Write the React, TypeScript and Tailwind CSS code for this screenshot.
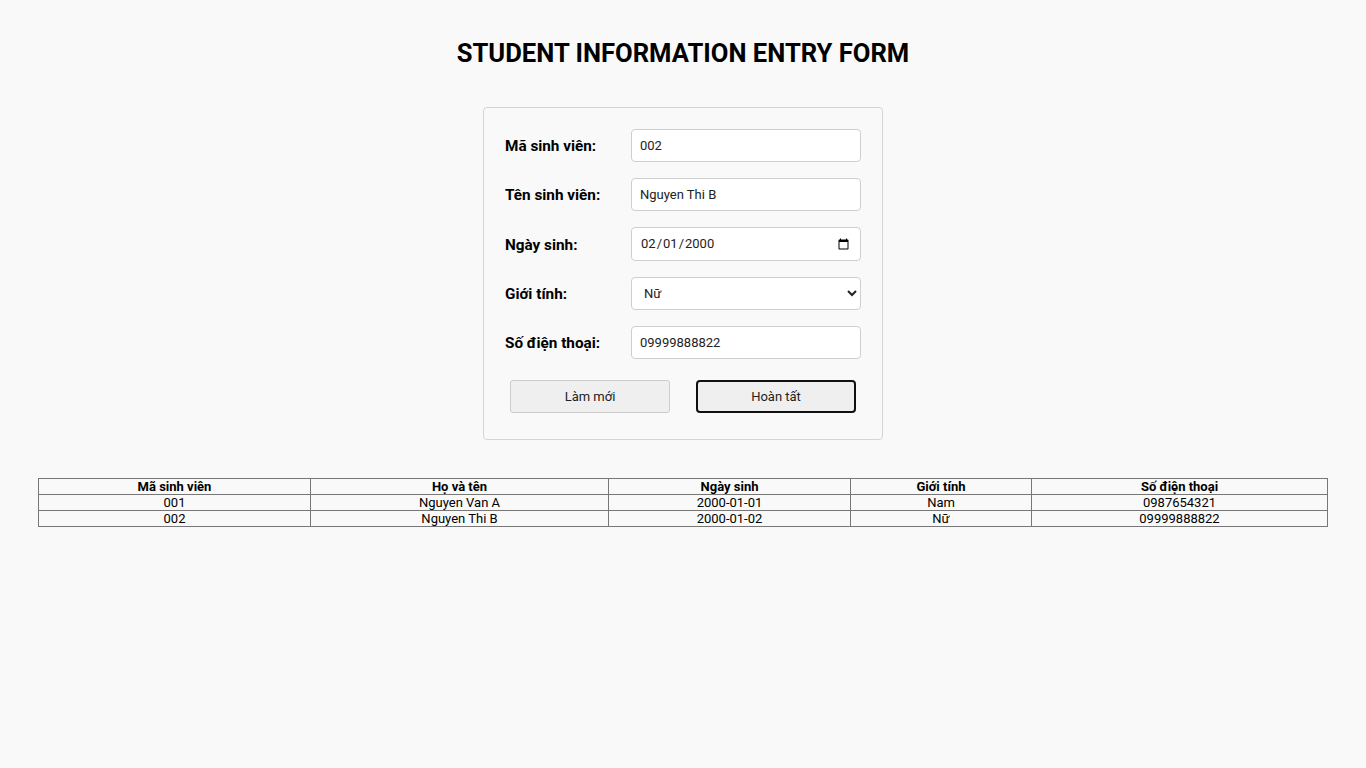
import { useState } from "react"

type Student = { id: string; name: string; dob: string; gender: string; phone: string }

const rows: Student[] = [
    { id: "001", name: "Nguyen Van A", dob: "2000-01-01", gender: "Nam", phone: "0987654321" },
    { id: "002", name: "Nguyen Thi B", dob: "2000-01-02", gender: "Nữ", phone: "09999888822" },
]

const inputCls =
    "w-[230px] h-[33px] rounded-[4px] border border-[#cfcfcf] bg-white px-2 text-[13px] text-[#222] outline-none"
const labelCls = "text-[15.3px] font-bold pt-[2px]"

export default function App() {
    const [id, setId] = useState("002")
    const [name, setName] = useState("Nguyen Thi B")
    const [dob, setDob] = useState("2000-02-01")
    const [gender, setGender] = useState("Nữ")
    const [phone, setPhone] = useState("09999888822")

    return (
        <div className="min-h-screen bg-[#f9f9f9] text-black font-['Roboto',sans-serif] pt-[36px]">
            <h1 className="text-center text-[25.6px] font-bold leading-[34px]">STUDENT INFORMATION ENTRY FORM</h1>

            <div className="mx-auto mt-[37px] w-[400px] rounded-[4px] border border-[#d4d4d4] bg-[#f9f9f9] px-[21px] pt-[21px] pb-[26px]">
                <div className="flex flex-col gap-[16px]">
                    <div className="flex items-center justify-between">
                        <label className={labelCls}>Mã sinh viên:</label>
                        <input className={inputCls} value={id} onChange={(e) => setId(e.target.value)} />
                    </div>
                    <div className="flex items-center justify-between">
                        <label className={labelCls}>Tên sinh viên:</label>
                        <input className={inputCls} value={name} onChange={(e) => setName(e.target.value)} />
                    </div>
                    <div className="flex items-center justify-between">
                        <label className={labelCls}>Ngày sinh:</label>
                        <input type="date" className={inputCls + " h-[34px]"} value={dob} onChange={(e) => setDob(e.target.value)} />
                    </div>
                    <div className="flex items-center justify-between">
                        <label className={labelCls}>Giới tính:</label>
                        <select className={inputCls} value={gender} onChange={(e) => setGender(e.target.value)}>
                            <option>Nam</option>
                            <option>Nữ</option>
                        </select>
                    </div>
                    <div className="flex items-center justify-between">
                        <label className={labelCls}>Số điện thoại:</label>
                        <input className={inputCls} value={phone} onChange={(e) => setPhone(e.target.value)} />
                    </div>
                </div>

                <div className="mt-[21px] flex justify-center gap-[26px]">
                    <button className="h-[33px] w-[160px] rounded-[3px] border border-[#cccccc] bg-[#efefef] text-[13px] text-[#222]">
                        Làm mới
                    </button>
                    <button className="h-[33px] w-[160px] rounded-[4px] border-2 border-[#111] bg-[#efefef] text-[13px] text-[#222]">
                        Hoàn tất
                    </button>
                </div>
            </div>

            <table className="mx-auto mt-[38px] w-[1290px] border-collapse text-[13px] leading-[15px]">
                <thead>
                    <tr>
                        <th className="w-[272px] border border-[#777] font-bold">Mã sinh viên</th>
                        <th className="w-[298px] border border-[#777] font-bold">Họ và tên</th>
                        <th className="w-[242px] border border-[#777] font-bold">Ngày sinh</th>
                        <th className="w-[181px] border border-[#777] font-bold">Giới tính</th>
                        <th className="border border-[#777] font-bold">Số điện thoại</th>
                    </tr>
                </thead>
                <tbody>
                    {rows.map((r) => (
                        <tr key={r.id}>
                            <td className="border border-[#777] text-center">{r.id}</td>
                            <td className="border border-[#777] text-center">{r.name}</td>
                            <td className="border border-[#777] text-center">{r.dob}</td>
                            <td className="border border-[#777] text-center">{r.gender}</td>
                            <td className="border border-[#777] text-center">{r.phone}</td>
                        </tr>
                    ))}
                </tbody>
            </table>
        </div>
    )
}
